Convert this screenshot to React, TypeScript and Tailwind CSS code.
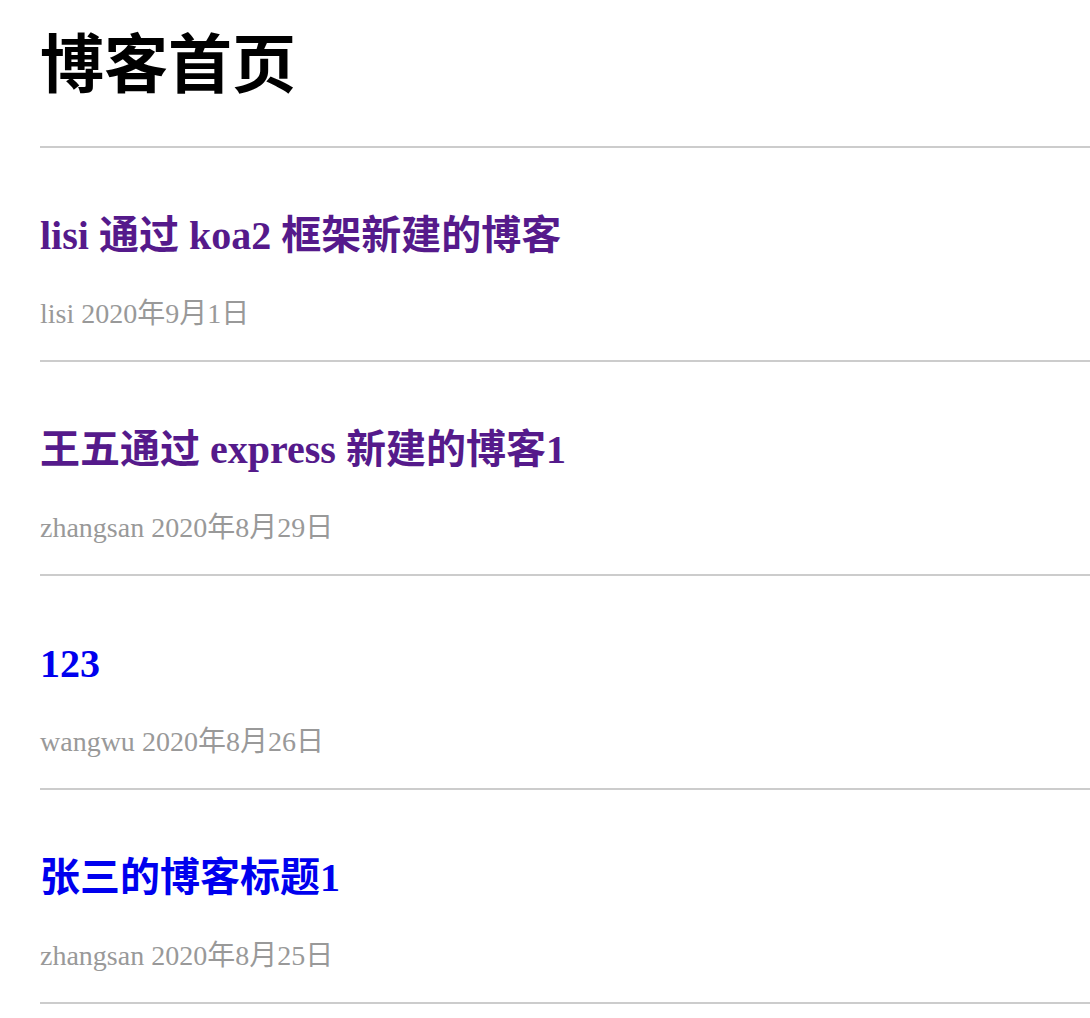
const posts = [
  { id: 1, title: 'lisi 通过 koa2 框架新建的博客', author: 'lisi', date: '2020年9月1日', visited: true },
  { id: 2, title: '王五通过 express 新建的博客1', author: 'zhangsan', date: '2020年8月29日', visited: true },
  { id: 3, title: '123', author: 'wangwu', date: '2020年8月26日', visited: false },
  { id: 4, title: '张三的博客标题1', author: 'zhangsan', date: '2020年8月25日', visited: false },
];

export default function App() {
  return (
    <div className="min-h-screen bg-white pl-[40px] font-['Liberation_Serif','Noto_Sans_CJK_SC',serif]">
      <h1 className="pt-[29px] text-[64px] leading-[72px] font-bold text-black font-['Liberation_Sans','Noto_Sans_CJK_SC',sans-serif]">
        博客首页
      </h1>
      <hr className="mt-[45px] border-0 h-[2px] bg-[#cccccc]" />

      {posts.map((p) => (
        <div key={p.id}>
          <div className="pt-[64px] pb-[28px]">
            <a
              href="#"
              className={`block text-[40px] leading-[48px] font-bold ${p.visited ? 'text-[#551a8b]' : 'text-[#0000ee]'}`}
            >
              {p.title}
            </a>
            <p className="mt-[36px] text-[28px] leading-[36px] text-[#999999]">
              {p.author} {p.date}
            </p>
          </div>
          <hr className="border-0 h-[2px] bg-[#cccccc]" />
        </div>
      ))}
    </div>
  );
}
